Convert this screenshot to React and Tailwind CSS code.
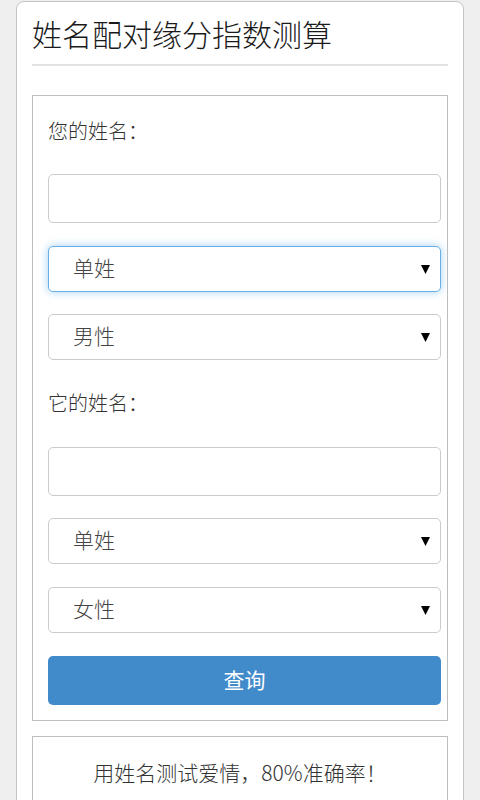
import React from 'react';

const cjk = { fontFamily: '"Noto Sans CJK SC", "Noto Sans", sans-serif' };

const Caret = () => (
  <svg width="9" height="10" viewBox="0 0 9 10" className="absolute right-[10px] top-1/2 -translate-y-1/2">
    <polygon points="0,1 9,1 4.5,10" fill="#000" />
  </svg>
);

const SelectBox = ({ value, focused }) => (
  <div
    className={`relative flex h-[46px] items-center rounded-[5px] border bg-white pb-[3px] pl-[24px] text-[21px] font-light text-[#444] ${
      focused
        ? 'border-[#66afe9] shadow-[0_0_8px_rgba(102,175,233,0.6)]'
        : 'border-[#cccccc]'
    }`}
  >
    <span>{value}</span>
    <Caret />
  </div>
);

const TextBox = () => (
  <div className="h-[49px] rounded-[5px] border border-[#cccccc] bg-white" />
);

const App = () => {
  return (
    <div className="min-h-[800px] overflow-hidden bg-[#efefef] pt-px" style={cjk}>
      <div className="ml-[16px] w-[448px] rounded-[8px] border border-[#c4c4c4] bg-white px-[15px] pb-10">
        <h1 className="pt-[12px] text-[30px] font-light leading-[38px] text-[#1a1a1a]">姓名配对缘分指数测算</h1>
        <div className="mt-[12px] h-[2px] bg-[#e2e2e2]" />

        <div className="mt-[29px] border border-[#bdbdbd] pb-[15px] pl-[15px] pr-[6px] pt-[21px]">
          <div className="text-[20px] font-light leading-[28px] text-[#333]">您的姓名：</div>
          <div className="mt-[29px]"><TextBox /></div>
          <div className="mt-[23px]"><SelectBox value="单姓" focused /></div>
          <div className="mt-[22px]"><SelectBox value="男性" /></div>

          <div className="mt-[29px] text-[20px] font-light leading-[28px] text-[#333]">它的姓名：</div>
          <div className="mt-[30px]"><TextBox /></div>
          <div className="mt-[22px]"><SelectBox value="单姓" /></div>
          <div className="mt-[23px]"><SelectBox value="女性" /></div>

          <button className="mt-[23px] flex h-[49px] w-full items-center justify-center rounded-[5px] bg-[#428bca] pb-[2px] text-[21px] text-white">
            查询
          </button>
        </div>

        <div className="mt-[15px] border border-[#bdbdbd] pb-[20px] pt-[20px] text-center">
          <p className="text-[21px] font-light leading-[30px] text-[#333]">用姓名测试爱情，80%准确率！</p>
        </div>
      </div>
    </div>
  );
};

export default App;
